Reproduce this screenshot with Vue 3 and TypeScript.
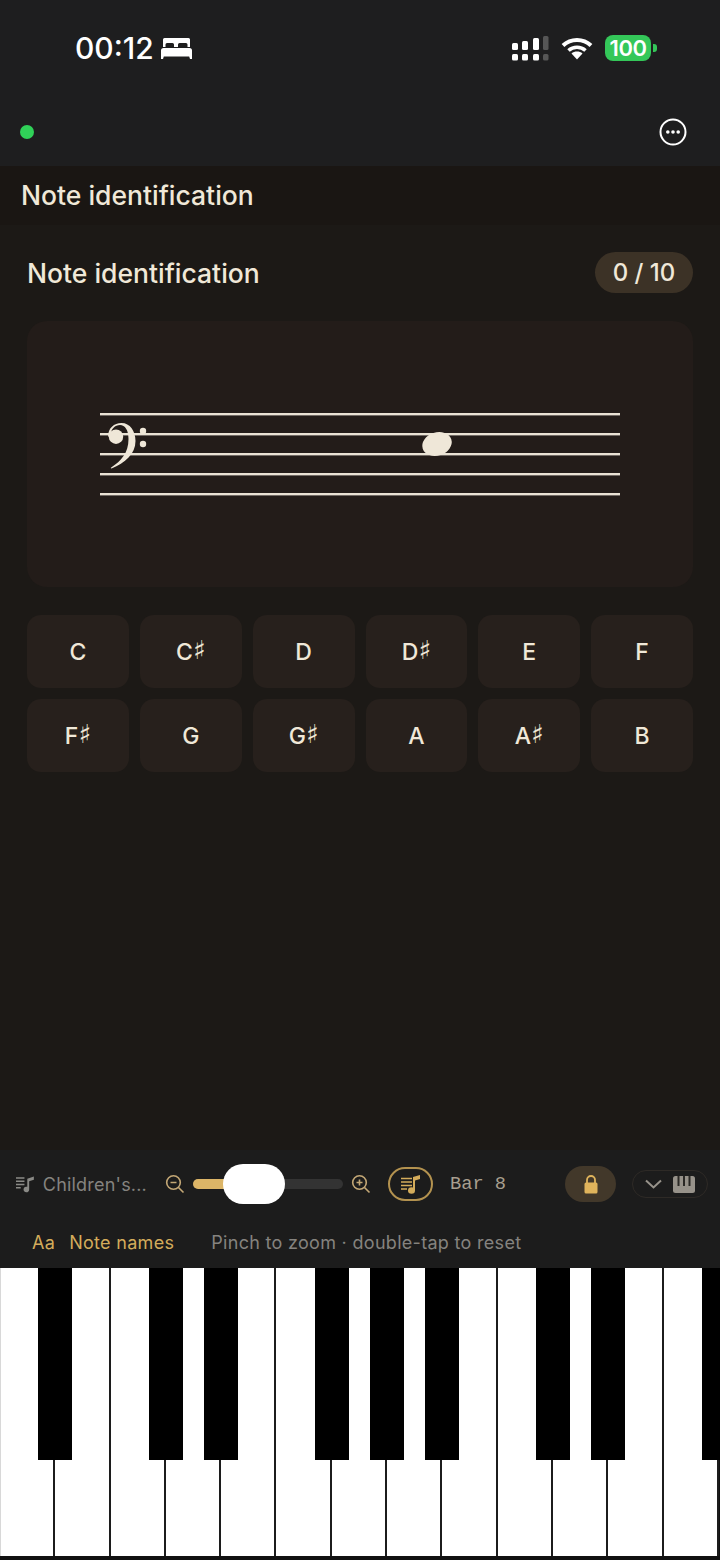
<template>
  <div class="page">
    <header class="top">
      <div class="status">
        <div class="status-left">
          <span class="time">00:12</span>
          <svg class="bed" width="31" height="21" viewBox="0 0 31 21">
            <path d="M3.500 0h24a1.500 1.500 0 0 1 1.500 1.500V9h-2.500V6.500a1.500 1.500 0 0 0-1.500-1.500h-6.500a1.500 1.500 0 0 0-1.500 1.500V9h-4V6.500A1.500 1.500 0 0 0 11.500 5H6a1.500 1.500 0 0 0-1.500 1.500V9H2V1.500A1.500 1.500 0 0 1 3.500 0z" fill="#fff" />
            <path d="M2.500 10h26a2.500 2.500 0 0 1 2.500 2.500V21h-2l-.8-2.500H2.800L2 21H0v-8.500A2.500 2.500 0 0 1 2.500 10z" fill="#fff" />
          </svg>
        </div>
        <div class="status-right">
          <svg width="37" height="25" viewBox="0 0 37 25">
            <rect x="0" y="7" width="6" height="7" rx="1.500" fill="#fff" />
            <rect x="10" y="5" width="6" height="9" rx="1.500" fill="#fff" />
            <rect x="21" y="2" width="6" height="12" rx="1.500" fill="#fff" />
            <rect x="31" y="0" width="5.500" height="14" rx="1.500" fill="#565656" />
            <rect x="0" y="18" width="6" height="6.500" rx="1.500" fill="#fff" />
            <rect x="10" y="18" width="6" height="6.500" rx="1.500" fill="#fff" />
            <rect x="21" y="18" width="6" height="6.500" rx="1.500" fill="#fff" />
            <rect x="31" y="18" width="5.500" height="6.500" rx="1.500" fill="#565656" />
          </svg>
          <svg width="32" height="24" viewBox="0 0 32 24">
            <path d="M2 9.500C9.800 2 22.200 2 30 9.500" fill="none" stroke="#fff" stroke-width="4" />
            <path d="M7.500 14.500c4.800-4.400 12.200-4.400 17 0" fill="none" stroke="#fff" stroke-width="3.600" />
            <path d="M16 23.500l-5.500-6c3-2.600 8-2.600 11 0z" fill="#fff" />
          </svg>
          <div class="battery">
            <span class="battery-body">100</span>
            <span class="battery-nub"></span>
          </div>
        </div>
      </div>
      <div class="nav">
        <span class="dot"></span>
        <svg width="28" height="28" viewBox="0 0 28 28">
          <circle cx="14" cy="14" r="12.500" fill="none" stroke="#fff" stroke-width="2" />
          <circle cx="8.800" cy="14" r="1.800" fill="#fff" />
          <circle cx="14" cy="14" r="1.800" fill="#fff" />
          <circle cx="19.200" cy="14" r="1.800" fill="#fff" />
        </svg>
      </div>
    </header>

    <div class="title-bar">Note identification</div>

    <main class="content">
      <div class="exercise-head">
        <h2 class="exercise-title">Note identification</h2>
        <span class="score">0 / 10</span>
      </div>

      <div class="staff-card">
        <svg class="staff" width="520" height="84" viewBox="0 0 520 84">
          <rect v-for="y in staffLines" :key="y" x="0" :y="y" width="520" height="2.400" fill="#e9e2d4" />
          <path
            d="M8 24C8 15 14 10 21.500 10C30 10 35.500 18 35.500 28C35.500 41 25 50 11.500 55.500C10.500 55.500 10.500 54.800 11.500 54.300C21 48 28.500 40 28.500 26C28.500 17 25 12 20 12C15 12 11 16 11 21Z"
            fill="#efe7d8"
          />
          <circle cx="16" cy="23.700" r="7.200" fill="#efe7d8" />
          <circle cx="43" cy="18" r="3.200" fill="#efe7d8" />
          <circle cx="43" cy="31" r="3.200" fill="#efe7d8" />
          <ellipse cx="337" cy="31" rx="15" ry="11.500" transform="rotate(-18 337 31)" fill="#efe7d8" />
        </svg>
      </div>

      <div class="note-grid">
        <button v-for="note in notes" :key="note" class="note-btn" type="button">
          {{ note[0] }}<span v-if="note.length > 1" class="sharp">{{ note[1] }}</span>
        </button>
      </div>
    </main>

    <section class="toolbar">
      <div class="controls">
        <div class="piece">
          <svg width="20" height="18" viewBox="0 0 20 18">
            <path d="M0 2.500h9M0 6h9M0 9.500h9M0 13h5" stroke="#8a8a86" stroke-width="1.600" fill="none" />
            <path d="M12 13V3.500L19 1v3.500L14 6v8.500A3 3 0 1 1 12 12z" fill="#8a8a86" />
          </svg>
          <span class="piece-name">Children's...</span>
        </div>
        <div class="zoom">
          <svg width="20" height="20" viewBox="0 0 20 20" fill="none" stroke="#c4a876" stroke-width="1.600">
            <circle cx="8.500" cy="8.500" r="6.800" />
            <path d="M5.500 8.500h6M13.500 13.500l5 5" />
          </svg>
          <div class="slider">
            <span class="slider-fill"></span>
            <span class="slider-thumb"></span>
          </div>
          <svg width="20" height="20" viewBox="0 0 20 20" fill="none" stroke="#c4a876" stroke-width="1.600">
            <circle cx="8.500" cy="8.500" r="6.800" />
            <path d="M5.500 8.500h6M8.500 5.500v6M13.500 13.500l5 5" />
          </svg>
        </div>
        <button class="follow-btn" type="button">
          <svg width="20" height="20" viewBox="0 0 20 20">
            <path d="M0 4.500h11M0 8h11M0 11.500h11M0 15h6" stroke="#d4ac5b" stroke-width="1.500" fill="none" />
            <path d="M12 16.500V3L19 1v4L14 6.500v10z" fill="#d4ac5b" />
            <ellipse cx="10.500" cy="16.500" rx="3.500" ry="3.200" fill="#d4ac5b" />
          </svg>
        </button>
        <span class="bar-label">Bar 8</span>
        <button class="lock-btn" type="button">
          <svg width="14" height="19" viewBox="0 0 14 19">
            <path d="M3 8V5a4 4 0 0 1 8 0v3" fill="none" stroke="#e0b45c" stroke-width="1.800" />
            <rect x="0.500" y="7.500" width="13" height="11" rx="1.500" fill="#e0b45c" />
          </svg>
        </button>
        <button class="keys-btn" type="button">
          <svg width="17" height="10" viewBox="0 0 17 10">
            <path d="M1 1.500l7.500 7 7.500-7" fill="none" stroke="#97928a" stroke-width="2" />
          </svg>
          <svg width="22" height="17" viewBox="0 0 22 17">
            <rect width="22" height="17" rx="2.500" fill="#97928a" />
            <path d="M5.500 0v10M11 0v10M16.500 0v10" stroke="#2a2825" stroke-width="2" />
          </svg>
        </button>
      </div>
      <div class="hints">
        <span class="names-toggle"><span>Aa</span><span>Note names</span></span>
        <span class="hint">Pinch to zoom · double-tap to reset</span>
      </div>
    </section>

    <section class="piano">
      <div v-for="n in 13" :key="n" class="white-key"></div>
      <div
        v-for="k in blackKeys"
        :key="k"
        class="black-key"
        :style="{ left: `${k * KEY_WIDTH - 17}px` }"
      ></div>
    </section>
  </div>
</template>

<script setup lang="ts">
const KEY_WIDTH = 55.3

const staffLines: number[] = [0, 20, 40, 60, 80]

const notes: string[] = ['C', 'C♯', 'D', 'D♯', 'E', 'F', 'F♯', 'G', 'G♯', 'A', 'A♯', 'B']

// boundaries between white keys that carry a black key
const blackKeys: number[] = [1, 3, 4, 6, 7, 8, 10, 11, 13]
</script>

<style>
body {
  background: #1c1916;
}
</style>

<style scoped>
.page {
  width: 720px;
  height: 1560px;
  display: flex;
  flex-direction: column;
  overflow: hidden;
  background: #1c1916;
  font-family: Inter, 'Liberation Sans', sans-serif;
  color: #f0e8d8;
}

.top {
  height: 166px;
  background: #1e1e1f;
  flex-shrink: 0;
}

.status {
  height: 98px;
  padding: 0 63px 2px 75px;
  box-sizing: border-box;
  display: flex;
  align-items: center;
  justify-content: space-between;
}

.status-left {
  display: flex;
  align-items: center;
  gap: 7px;
}

.time {
  font-size: 30px;
  font-weight: 500;
  color: #fff;
}

.status-right {
  display: flex;
  align-items: center;
  gap: 12px;
}

.battery {
  display: flex;
  align-items: center;
  gap: 2px;
}

.battery-body {
  width: 46px;
  height: 26px;
  border-radius: 8px;
  background: #34c759;
  color: #fff;
  font-size: 22px;
  font-weight: 600;
  line-height: 26px;
  text-align: center;
  letter-spacing: -0.5px;
}

.battery-nub {
  width: 4px;
  height: 8px;
  border-radius: 0 3px 3px 0;
  background: #34c759;
}

.nav {
  height: 68px;
  padding: 0 33px 0 20px;
  display: flex;
  align-items: center;
  justify-content: space-between;
}

.dot {
  width: 14px;
  height: 14px;
  border-radius: 50%;
  background: #30d158;
}

.title-bar {
  height: 59px;
  flex-shrink: 0;
  background: #1a1613;
  padding-left: 21px;
  font-size: 26.500px;
  font-weight: 500;
  line-height: 59px;
}

.content {
  flex: 1;
  padding: 27px 27px 0;
}

.exercise-head {
  height: 41px;
  display: flex;
  align-items: center;
  justify-content: space-between;
}

.exercise-title {
  margin: 0;
  font-size: 26.500px;
  font-weight: 500;
}

.score {
  width: 98px;
  height: 41px;
  border-radius: 21px;
  background: #3c3226;
  font-size: 24px;
  font-weight: 500;
  line-height: 41px;
  text-align: center;
}

.staff-card {
  height: 266px;
  margin-top: 28px;
  border-radius: 20px;
  background: #231c19;
  display: flex;
  justify-content: center;
  padding-top: 92px;
  box-sizing: border-box;
}

.note-grid {
  margin-top: 28px;
  display: grid;
  grid-template-columns: repeat(6, 1fr);
  grid-auto-rows: 73px;
  gap: 11px;
}

.note-btn {
  padding: 0;
  border: none;
  border-radius: 14px;
  background: #27201c;
  color: #f0e8d8;
  font-family: inherit;
  font-size: 23px;
  font-weight: 500;
}

.sharp {
  font-family: 'DejaVu Sans', sans-serif;
  font-size: 26px;
  font-weight: 700;
  line-height: 0;
  vertical-align: 1px;
}

.toolbar {
  height: 118px;
  flex-shrink: 0;
  background: #1c1c1c;
}

.controls {
  height: 68px;
  padding: 0 12px 0 16px;
  display: flex;
  align-items: center;
}

.piece {
  width: 131px;
  display: flex;
  align-items: center;
  gap: 8px;
  flex-shrink: 0;
}

.piece-name {
  font-size: 18px;
  color: #85837f;
  white-space: nowrap;
  letter-spacing: 0.2px;
}

.zoom {
  margin-left: 18px;
  display: flex;
  align-items: center;
  gap: 8px;
}

.slider {
  position: relative;
  width: 150px;
  height: 10px;
  border-radius: 5px;
  background: #333333;
}

.slider-fill {
  position: absolute;
  left: 0;
  top: 0;
  width: 40px;
  height: 10px;
  border-radius: 5px 0 0 5px;
  background: #dcb567;
}

.slider-thumb {
  position: absolute;
  left: 30px;
  top: -15px;
  width: 62px;
  height: 40px;
  border-radius: 20px;
  background: #fff;
}

.follow-btn {
  margin-left: 17px;
  width: 45px;
  height: 34px;
  padding: 0;
  border: 2px solid #b3924f;
  border-radius: 17px;
  background: none;
  display: flex;
  align-items: center;
  justify-content: center;
}

.bar-label {
  margin-left: 17px;
  width: 115px;
  font-family: 'Liberation Mono', monospace;
  font-size: 18.700px;
  color: #a89f8f;
}

.lock-btn {
  width: 51px;
  height: 36px;
  padding: 0;
  border: none;
  border-radius: 18px;
  background: #42382a;
  display: flex;
  align-items: center;
  justify-content: center;
}

.keys-btn {
  margin-left: 16px;
  width: 76px;
  height: 28px;
  padding: 0;
  border: 1px solid #2e2a26;
  border-radius: 14px;
  background: none;
  display: flex;
  align-items: center;
  justify-content: center;
  gap: 11px;
}

.hints {
  height: 48px;
  padding-left: 32px;
  display: flex;
  align-items: center;
  font-size: 18px;
  letter-spacing: 0.3px;
}

.names-toggle {
  display: flex;
  gap: 14px;
  color: #d4ac5b;
}

.hint {
  margin-left: 37px;
  color: #85837f;
}

.piano {
  position: relative;
  height: 292px;
  flex-shrink: 0;
  padding-bottom: 4px;
  box-sizing: border-box;
  display: flex;
  background: #111;
  overflow: hidden;
}

.white-key {
  flex: 0 0 55.3px;
  box-sizing: border-box;
  background: #fff;
  border-right: 2px solid #1c1c1c;
}

.white-key:first-child {
  box-shadow: inset 1px 0 0 #d8d8d8;
}

.white-key:last-child {
  flex: 1;
}

.black-key {
  position: absolute;
  top: 0;
  width: 34px;
  height: 192px;
  background: #000;
}
</style>
